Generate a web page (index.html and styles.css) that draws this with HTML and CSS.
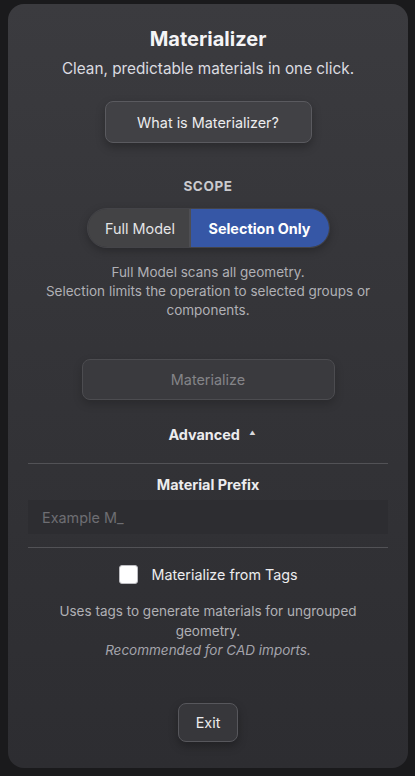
FILE: index.html
```html
<!DOCTYPE html>
<html>
<head>
<meta charset="utf-8">
<link rel="stylesheet" href="styles.css">
</head>
<body>
<div class="panel">
  <h1 class="title">Materializer</h1>
  <p class="subtitle">Clean, predictable materials in one click.</p>
  <button class="btn btn-info">What is Materializer?</button>
  <div class="section-label">SCOPE</div>
  <div class="segmented">
    <span class="seg seg-left">Full Model</span>
    <span class="seg seg-right">Selection Only</span>
  </div>
  <p class="desc desc-scope">Full Model scans all geometry.<br>Selection limits the operation to selected groups or components.</p>
  <button class="btn btn-primary" disabled>Materialize</button>
  <div class="advanced">Advanced <span class="caret">&#9650;</span></div>
  <div class="divider"></div>
  <div class="field-label">Material Prefix</div>
  <input class="input" type="text" placeholder="Example M_">
  <div class="divider divider-2"></div>
  <label class="check-row"><span class="checkbox"></span><span class="check-label">Materialize from Tags</span></label>
  <p class="desc desc-tags">Uses tags to generate materials for ungrouped geometry.<br><em>Recommended for CAD imports.</em></p>
  <button class="btn btn-exit">Exit</button>
</div>
</body>
</html>
```

FILE: styles.css
```css
* { box-sizing: border-box; }
html, body { margin: 0; padding: 0; }
body {
  background: #1a1a1c;
  width: 415px;
  height: 776px;
  padding: 4px 0 0 8px;
  font-family: Inter, "Liberation Sans", Arial, sans-serif;
  color: #f2f2f4;
  overflow: hidden;
}
.panel {
  width: 400px;
  height: 764px;
  border-radius: 16px;
  background: linear-gradient(180deg, #3b3b3f 0%, #343438 45%, #2d2d31 100%);
  padding: 23px 20px 0;
  display: flex;
  flex-direction: column;
  align-items: center;
}
.title {
  margin: 0;
  font-size: 20px;
  line-height: 24px;
  font-weight: 700;
  color: #f4f4f6;
}
.subtitle {
  margin: 8px 0 0;
  font-size: 15.3px;
  line-height: 20px;
  color: #dcdce0;
}
.btn {
  font-family: inherit;
  border-radius: 8px;
  border: 1px solid #5a5a5f;
  background: #414145;
  color: #ececee;
  font-size: 14.4px;
  box-shadow: 0 4px 10px rgba(0,0,0,0.28);
}
.btn-info {
  margin-top: 22px;
  width: 207px;
  height: 42px;
}
.section-label {
  margin-top: 34px;
  font-size: 13.5px;
  line-height: 18px;
  font-weight: 700;
  letter-spacing: 0.6px;
  color: #cacace;
}
.segmented {
  margin-top: 13px;
  display: flex;
  height: 40px;
  border-radius: 20px;
  overflow: hidden;
  border: 1px solid #444448;
  box-shadow: 0 3px 8px rgba(0,0,0,0.25);
}
.seg {
  display: flex;
  align-items: center;
  justify-content: center;
  font-size: 14.4px;
}
.seg-left {
  width: 103px;
  background: #434345;
  color: #e4e4e6;
  border-right: 2px solid #4e4e52;
  padding-left: 4px;
}
.seg-right {
  width: 138px;
  background: #3657a6;
  color: #ffffff;
  font-weight: 700;
}
.desc {
  margin: 0;
  text-align: center;
  font-size: 13.5px;
  line-height: 19px;
  color: #b0b0b5;
}
.desc-scope {
  margin-top: 15px;
  width: 345px;
}
.btn-primary {
  margin-top: 39px;
  width: 253px;
  height: 41px;
  background: #3a3a3e;
  border-color: #4c4c50;
  color: #848488;
  box-shadow: 0 4px 10px rgba(0,0,0,0.2);
}
.advanced {
  margin-top: 24px;
  font-size: 14.4px;
  line-height: 18px;
  font-weight: 700;
  color: #ececee;
  padding-left: 8px;
}
.caret {
  font-size: 6px;
  vertical-align: 5px;
  margin-left: 6px;
  color: #d8d8dc;
}
.divider {
  margin-top: 19px;
  align-self: stretch;
  height: 1px;
  background: #525256;
}
.divider-2 { margin-top: 13px; }
.field-label {
  margin-top: 12px;
  font-size: 14.4px;
  line-height: 18px;
  font-weight: 700;
  color: #ececee;
}
.input {
  margin-top: 6px;
  align-self: stretch;
  height: 34px;
  border: none;
  outline: none;
  background: #2d2d31;
  padding: 0 14px;
  font-family: inherit;
  font-size: 14.4px;
  color: #e0e0e0;
}
.input::placeholder { color: #6e6e73; }
.check-row {
  margin-top: 16px;
  display: flex;
  align-items: center;
  height: 20px;
}
.checkbox {
  width: 19px;
  height: 19px;
  background: #ffffff;
  border-radius: 3px;
  border: 1px solid #bdbdc2;
}
.check-label {
  margin-left: 14px;
  font-size: 14.3px;
  color: #ececee;
}
.desc-tags {
  margin-top: 18px;
  width: 320px;
  line-height: 19.5px;
}
.desc-tags em { color: #a4a4ac; }
.btn-exit {
  margin-top: 42px;
  width: 60px;
  height: 39px;
  background: #37373b;
  border-color: #57575c;
}
```
